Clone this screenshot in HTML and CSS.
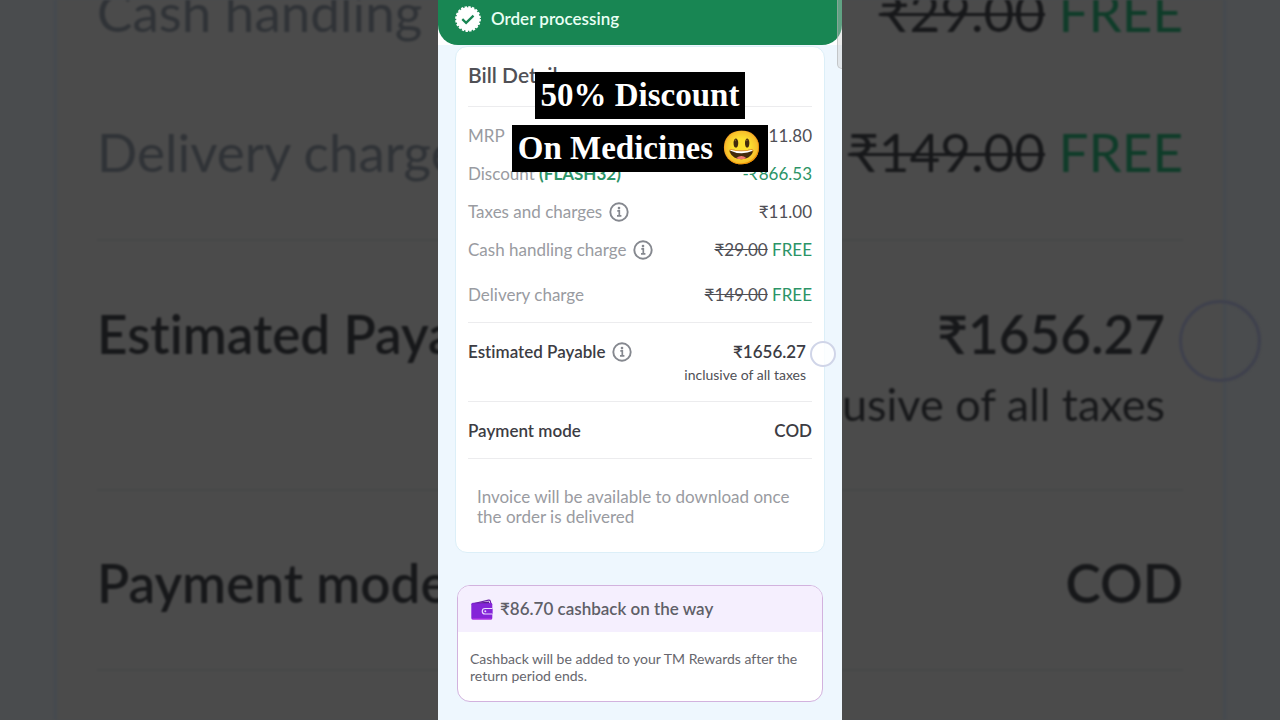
FILE: index.html
```
<!DOCTYPE html>
<html lang="en">
<head>
<meta charset="utf-8">
<meta name="viewport" content="width=device-width, initial-scale=1">
<title>Order processing</title>
<link rel="stylesheet" href="styles.css">
</head>
<body>
<svg class="defs" aria-hidden="true">
  <symbol id="info" viewBox="0 0 20 20">
    <circle cx="10" cy="10" r="8.7" fill="none" stroke="currentColor" stroke-width="1.9"/>
    <path d="M8.3 8.8h2v5M8 13.9h4.4" fill="none" stroke="currentColor" stroke-width="1.7"/>
    <circle cx="10" cy="6.1" r="1.3" fill="currentColor"/>
  </symbol>
</svg>
<div class="stage">
  <div class="backdrop" aria-hidden="true">
    <div class="backdrop-card">
      <div class="big-row"><span>Cash handling</span><span><s>₹29.00</s> <span class="big-free">FREE</span></span></div>
      <div class="big-row"><span>Delivery charge</span><span><s>₹149.00</s> <span class="big-free">FREE</span></span></div>
      <div class="big-total">
        <div class="big-line"><span>Estimated Payable</span><span>₹1656.27</span></div>
        <div class="big-note">inclusive of all taxes</div>
        <span class="big-touch"></span>
      </div>
      <div class="big-mode"><span>Payment mode</span><span>COD</span></div>
      <div class="big-end"></div>
    </div>
  </div>

  <main class="phone">
    <div class="status-wrap">
      <header class="status">
        <svg class="badge" viewBox="0 0 26 26" aria-hidden="true">
          <circle cx="13" cy="13" r="11.8" fill="#fff"/>
          <circle cx="13" cy="13" r="12" fill="none" stroke="#fff" stroke-width="1.8" stroke-dasharray="2.4 1.37"/>
          <path d="M7.300 13.200l3.800 3.600 7.400-7.200" fill="none" stroke="#188653" stroke-width="2.300"/>
        </svg>
        <span>Order processing</span>
      </header>
    </div>
    <span class="scroll-thumb"></span>

    <section class="bill">
      <h1 class="bill-title">Bill Details</h1>
      <div class="charges">
        <div class="row"><span class="label">MRP</span><span>₹2511.80</span></div>
        <div class="row"><span class="label">Discount <b class="code">(FLASH32)</b></span><span class="green">-₹866.53</span></div>
        <div class="row"><span class="label">Taxes and charges</span><button class="info" aria-label="About taxes and charges"><svg><use href="#info"/></svg></button><span class="value">₹11.00</span></div>
        <div class="row"><span class="label">Cash handling charge</span><button class="info" aria-label="About cash handling"><svg><use href="#info"/></svg></button><span class="value"><s>₹29.00</s> <span class="green">FREE</span></span></div>
        <div class="row delivery"><span class="label">Delivery charge</span><span><s>₹149.00</s> <span class="green">FREE</span></span></div>
      </div>
      <div class="total">
        <div class="total-line"><strong>Estimated Payable</strong><button class="info" aria-label="About the estimated amount"><svg><use href="#info"/></svg></button><strong class="value">₹1656.27</strong></div>
        <div class="total-note">inclusive of all taxes</div>
        <span class="touch"></span>
      </div>
      <div class="mode"><strong>Payment mode</strong><strong>COD</strong></div>
      <p class="invoice">Invoice will be available to download once the order is delivered</p>
      <div class="caption">
        <span class="caption-line">50% Discount</span>
        <span class="caption-line">On Medicines 😃</span>
      </div>
    </section>

    <section class="cashback">
      <h2 class="cashback-title">
        <svg class="wallet" viewBox="0 0 22 21" aria-hidden="true">
          <path d="M1 5L17.500 1.200Q19 1 19.300 2.200L20 5" fill="#f5effe" stroke="#6d22a8" stroke-width="1.200"/>
          <rect x="0.300" y="3.800" width="21" height="16.700" rx="1.500" fill="#8424d8"/>
          <path d="M1 4.300L18 2.500V4.300" fill="#5c1c92"/>
          <path d="M21.500 9.500H14a2.700 2.700 0 0 0 0 5.500h7.500" fill="#8424d8" stroke="#eadcff" stroke-width="1.200"/>
          <circle cx="14.300" cy="12.300" r="1" fill="#eadcff"/>
          <path d="M1.500 20H20.500" stroke="#c13bea" stroke-width="1"/>
        </svg>
        <span>₹86.70 cashback on the way</span>
      </h2>
      <p class="cashback-text">Cashback will be added to your TM Rewards after the return period ends.</p>
    </section>
  </main>
</div>
</body>
</html>
```
FILE: styles.css
```
* { box-sizing: border-box; }
body {
  margin: 0;
  background: #4a4c4e;
  font-family: Lato, "Noto Sans", sans-serif;
  font-size: 17px;
  line-height: 20px;
  font-variant-ligatures: none;
  color: #505056;
}
h1, h2, p { margin: 0; }
.defs { position: absolute; width: 0; height: 0; }

/* Page frame: enlarged, dimmed copy behind the phone column */
.stage {
  display: grid;
  grid-template-columns: minmax(0, 1fr);
  height: 100vh;
  overflow: hidden;
}
.backdrop, .phone { grid-area: 1 / 1; }
.backdrop {
  padding: 0 54px;
  overflow: hidden;
  font-size: 53px;
  line-height: 70px;
  color: #17181a;
  filter: blur(1px);
}
.backdrop-card {
  margin-top: -58px;
  padding: 0 40px;
  background: #4b4b4b;
  border: solid #454a4f;
  border-width: 0 3px;
}
.big-row {
  display: flex;
  justify-content: space-between;
  align-items: center;
  height: 140px;
  color: #303337;
}
.big-row s { color: #17181a; text-decoration-thickness: 3px; }
.big-free { color: #0f3c29; }
.big-total {
  position: relative;
  margin-top: 17px;
  padding: 58px 18px 50px 0;
  border-top: 2px solid #464748;
}
.big-line { display: flex; justify-content: space-between; font-weight: 600; }
.big-note { text-align: right; font-size: 45px; }
.big-touch {
  position: absolute;
  top: 59px;
  right: -78px;
  width: 82px;
  height: 82px;
  border: 3px solid #3e404d;
  border-radius: 50%;
}
.big-mode {
  display: flex;
  justify-content: space-between;
  align-items: center;
  height: 182px;
  padding-top: 6px;
  border: solid #464748;
  border-width: 2px 0;
  font-weight: 600;
}
.big-end { height: 60px; }

.phone {
  position: relative;
  justify-self: center;
  width: 100%;
  max-width: 404px;
  overflow: hidden;
  background: #eef7fe;
}

.status-wrap { background: #fff; }
.status {
  display: flex;
  align-items: center;
  gap: 10px;
  height: 45px;
  padding: 0 17px 8px;
  border-radius: 0 0 20px 20px;
  background: #188653;
  color: #e9fff4;
  font-weight: 600;
}
.badge { width: 26px; height: 26px; }
.scroll-thumb {
  position: absolute;
  top: 0;
  right: 0;
  width: 5px;
  height: 69px;
  border: 1px solid #aaa8;
  border-width: 0 0 1px 1px;
  border-radius: 0 0 0 5px;
  background: #ccc6;
}

.bill {
  position: relative;
  margin: 1px 17px 0;
  padding: 0 12px;
  border: 1px solid #dceff8;
  border-radius: 12px;
  background: #fff;
}
.bill-title {
  padding: 16px 0 19px;
  font-size: 21px;
  line-height: 24px;
  font-weight: 600;
}
.charges { padding: 10px 0 8px; border-top: 1px solid #ececee; }
.row { display: flex; justify-content: space-between; align-items: center; height: 38px; }
.delivery { margin-top: 7px; }
.label { color: #999ba1; }
.code, .green { color: #2c9467; }
.info {
  width: 20px;
  height: 20px;
  margin-left: 7px;
  padding: 0;
  border: 0;
  background: none;
  color: #85888f;
}
.info svg { display: block; width: 20px; height: 20px; }
.value { margin-left: auto; }

.total {
  position: relative;
  padding: 17px 6px 15px 0;
  border-top: 1px solid #ececee;
}
.total-line { display: flex; align-items: center; height: 24px; color: #3c3c43; }
.total-note { text-align: right; font-size: 14px; line-height: 22px; }
.touch {
  position: absolute;
  top: 18px;
  right: -24px;
  width: 26px;
  height: 26px;
  border: 2px solid #d0d5e8;
  border-radius: 50%;
  background: #fffc;
}
.mode {
  display: flex;
  justify-content: space-between;
  align-items: center;
  height: 58px;
  padding-top: 2px;
  border: solid #ececee;
  border-width: 1px 0;
  color: #3c3c43;
}
strong { font-weight: 600; }
.invoice { padding: 28px 9px 25px; color: #999ba1; }

.caption {
  position: absolute;
  top: 25px;
  left: 0;
  right: 0;
  display: flex;
  flex-direction: column;
  align-items: center;
  gap: 6px;
}
.caption-line {
  padding: 0 6px;
  background: #000;
  color: #fff;
  font: 700 33px/47px "Liberation Serif", serif;
  white-space: nowrap;
}

.cashback {
  margin: 32px 19px 0;
  border: 1px solid #d2b2de;
  border-radius: 13px;
  background: #fff;
  overflow: hidden;
}
.cashback-title {
  display: flex;
  align-items: center;
  gap: 7px;
  padding: 11px 13px;
  background: #f5effe;
  color: #5f5f68;
  font-size: 17px;
  line-height: 24px;
  font-weight: 600;
}
.wallet { width: 22px; height: 21px; }
.cashback-text {
  padding: 18px 12px 17px;
  font-size: 14px;
  line-height: 17px;
  color: #66666d;
}
```
